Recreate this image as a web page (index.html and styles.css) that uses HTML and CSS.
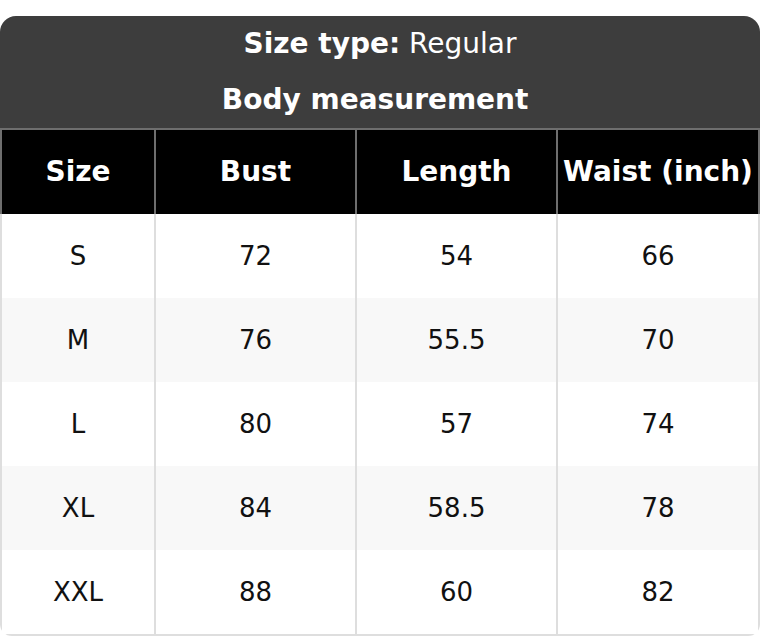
FILE: index.html
```html
<!DOCTYPE html>
<html>
<head>
<meta charset="utf-8">
<link rel="stylesheet" href="styles.css">
</head>
<body>
<div class="card">
  <div class="title">
    <div class="title-line"><b>Size type:</b> Regular</div>
    <div class="title-line"><b>Body measurement&nbsp;</b></div>
  </div>
  <div class="table">
    <div class="row head">
      <div class="cell">Size</div>
      <div class="cell">Bust</div>
      <div class="cell">Length</div>
      <div class="cell">Waist (inch)</div>
    </div>
    <div class="row">
      <div class="cell">S</div><div class="cell">72</div><div class="cell">54</div><div class="cell">66</div>
    </div>
    <div class="row alt">
      <div class="cell">M</div><div class="cell">76</div><div class="cell">55.5</div><div class="cell">70</div>
    </div>
    <div class="row">
      <div class="cell">L</div><div class="cell">80</div><div class="cell">57</div><div class="cell">74</div>
    </div>
    <div class="row alt">
      <div class="cell">XL</div><div class="cell">84</div><div class="cell">58.5</div><div class="cell">78</div>
    </div>
    <div class="row">
      <div class="cell">XXL</div><div class="cell">88</div><div class="cell">60</div><div class="cell">82</div>
    </div>
  </div>
</div>
</body>
</html>
```
FILE: styles.css
```css
html, body {
  margin: 0;
  padding: 0;
  background: #fff;
}
body {
  padding-top: 16px;
  font-family: "DejaVu Sans", sans-serif;
}
.card {
  width: 760px;
}
.title {
  background: #3d3d3d;
  border-radius: 16px 16px 0 0;
  color: #fff;
  text-align: center;
  font-size: 28px;
}
.title-line {
  height: 56px;
  line-height: 55px;
}
.title-line b {
  font-weight: bold;
}
.table {
  border: 2px solid #dedede;
  border-top: 0;
  border-radius: 0 0 12px 12px;
}
.row {
  display: grid;
  grid-template-columns: 154px 201px 201px 200px;
  height: 84px;
  background: #fff;
}
.row.alt {
  background: #f8f8f8;
}
.cell {
  display: flex;
  align-items: center;
  justify-content: center;
  font-size: 26px;
  color: #111;
  border-right: 2px solid #dedede;
}
.cell:last-child {
  border-right: 0;
}
.row.head {
  margin: 0 -2px;
  background: #000;
  border: 2px solid #6e6e6e;
  border-bottom: 0;
  height: 84px;
  grid-template-columns: 154px 201px 201px 200px;
}
.row.head .cell {
  color: #fff;
  font-weight: bold;
  font-size: 28px;
  padding-bottom: 2px;
  border-right-color: #6e6e6e;
}
```
